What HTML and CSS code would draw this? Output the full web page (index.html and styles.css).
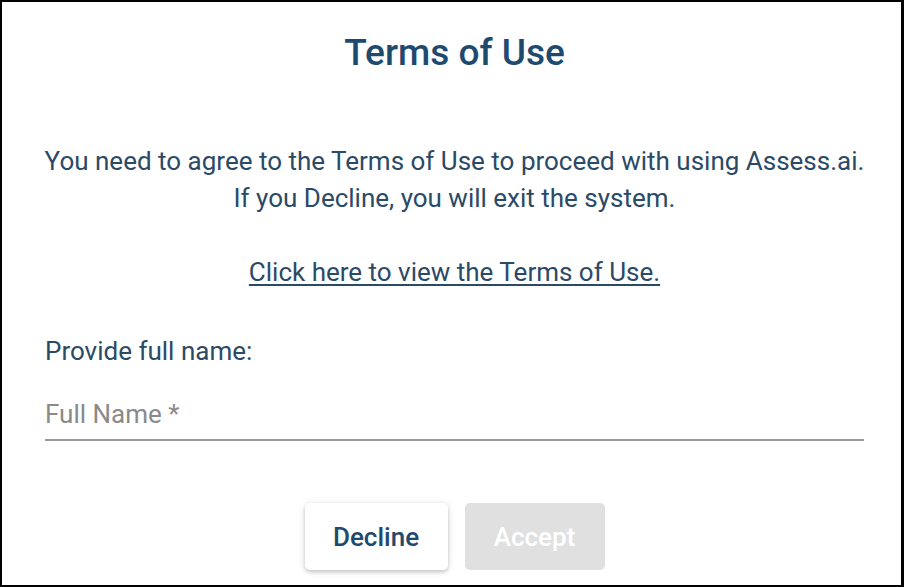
FILE: index.html
```html
<!DOCTYPE html>
<html lang="en">
<head>
<meta charset="utf-8">
<title>Terms of Use</title>
<link rel="stylesheet" href="styles.css">
</head>
<body>
<div class="dialog">
  <h1 class="title">Terms of Use</h1>
  <p class="intro">You need to agree to the Terms of Use to proceed with using Assess.ai.<br>If you Decline, you will exit the system.</p>
  <p class="link-row"><a class="terms-link" href="#">Click here to view the Terms of Use.</a></p>
  <p class="label">Provide full name:</p>
  <div class="field">
    <input class="field-input" type="text" placeholder="Full Name *">
  </div>
  <div class="actions">
    <button class="btn btn-decline" type="button">Decline</button>
    <button class="btn btn-accept" type="button" disabled>Accept</button>
  </div>
</div>
</body>
</html>
```
FILE: styles.css
```css
html, body {
  margin: 0;
  padding: 0;
  background: #ffffff;
}
body {
  font-family: Roboto, "Liberation Sans", sans-serif;
  color: #2b4a66;
}
.dialog {
  box-sizing: border-box;
  width: 904px;
  height: 587px;
  border: 2px solid #000;
  border-right-width: 3px;
  padding: 30px 37px 0 43px;
  display: flex;
  flex-direction: column;
  overflow: hidden;
}
.title {
  margin: 0;
  font-size: 37px;
  line-height: 42px;
  font-weight: 500;
  color: #1f4a6f;
  text-align: center;
}
.intro {
  margin: 69px -20px 0;
  font-size: 26px;
  line-height: 37px;
  text-align: center;
  white-space: nowrap;
}
.link-row {
  margin: 37px 0 0;
  font-size: 26px;
  line-height: 37px;
  text-align: center;
}
.terms-link {
  color: #2b4a66;
  text-decoration: underline;
  text-underline-offset: 3px;
}
.label {
  margin: 42px 0 0;
  font-size: 26px;
  line-height: 37px;
}
.field {
  margin-top: 26px;
  border-bottom: 2px solid #9a9a9a;
  padding-bottom: 6px;
}
.field-input {
  display: block;
  width: 100%;
  box-sizing: border-box;
  border: 0;
  outline: 0;
  padding: 0;
  margin: 0;
  font-family: Roboto, "Liberation Sans", sans-serif;
  font-size: 26px;
  line-height: 37px;
  height: 37px;
  color: #2b4a66;
  background: transparent;
}
.field-input::placeholder {
  color: #8a8a8a;
}
.actions {
  margin-top: 62px;
  display: flex;
  justify-content: center;
  gap: 17px;
}
.btn {
  font-family: Roboto, "Liberation Sans", sans-serif;
  font-size: 26px;
  font-weight: 500;
  height: 67px;
  border: 0;
  border-radius: 5px;
  padding: 0;
}
.btn-decline {
  width: 143px;
  background: #fff;
  color: #1f4a6f;
  box-shadow: 0 2px 4px rgba(0,0,0,0.2), 0 1px 10px rgba(0,0,0,0.08);
}
.btn-accept {
  width: 140px;
  background: #e0e0e0;
  color: #ffffff;
}
```
